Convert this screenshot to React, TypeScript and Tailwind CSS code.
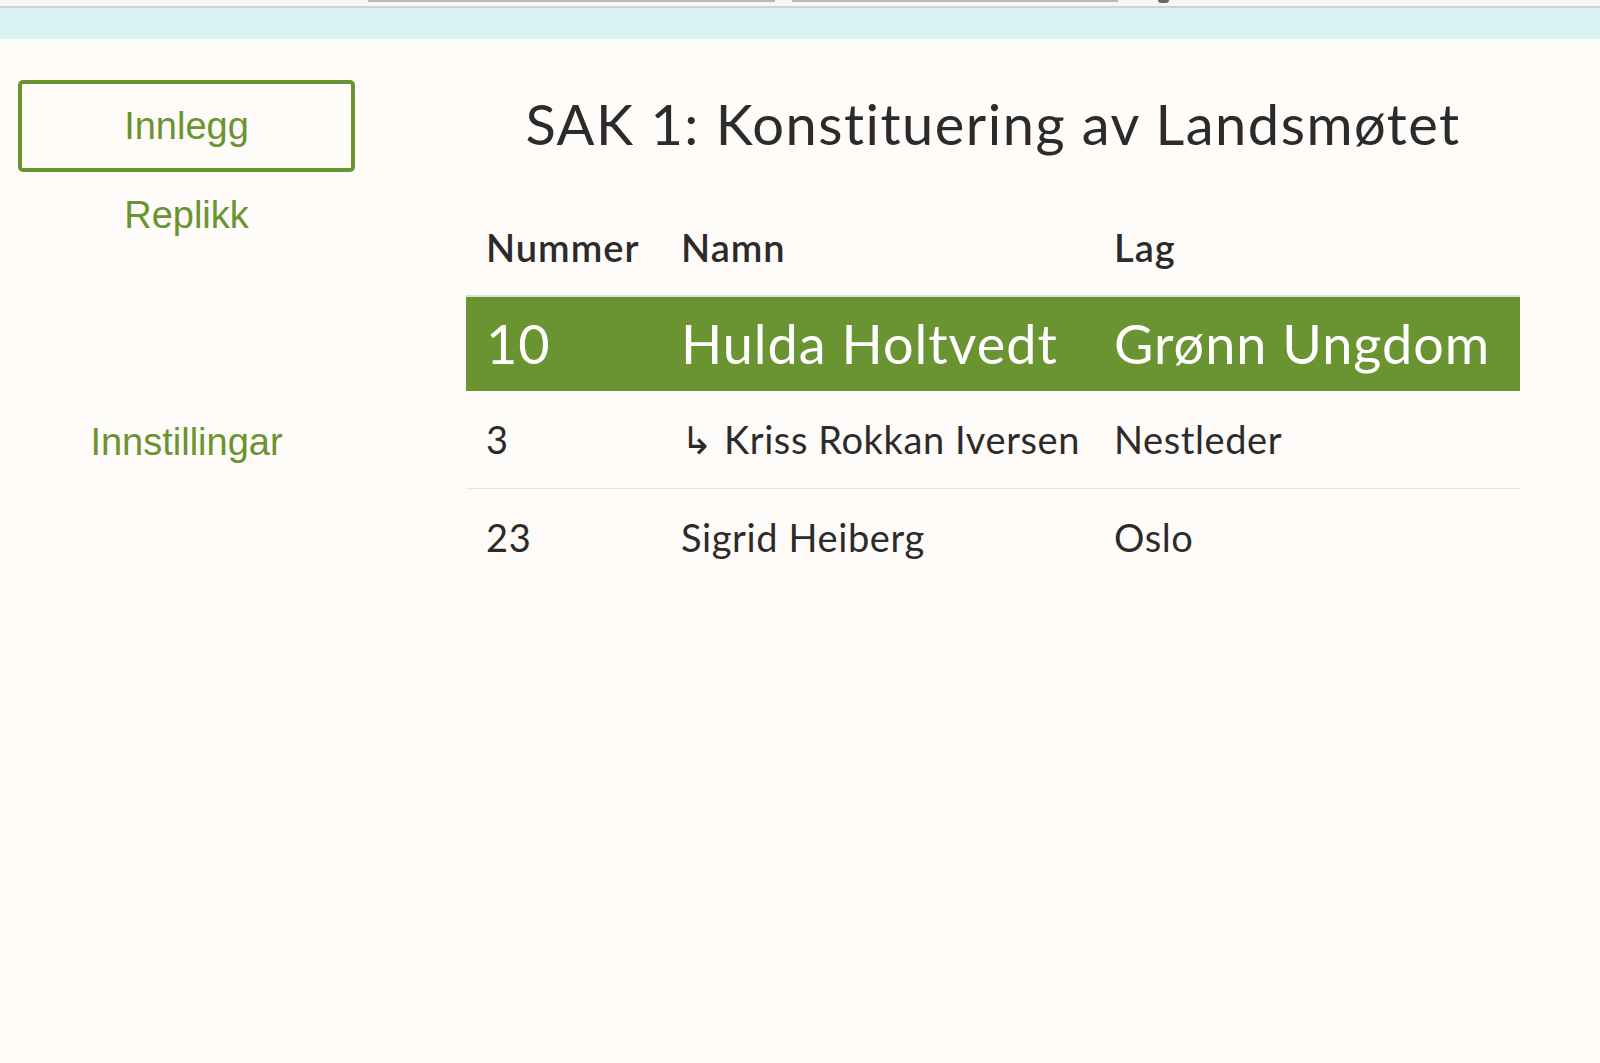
import React from 'react';

const rows = [
  { nr: '10', name: 'Hulda Holtvedt', lag: 'Grønn Ungdom', active: true },
  { nr: '3', name: '↳ Kriss Rokkan Iversen', lag: 'Nestleder' },
  { nr: '23', name: 'Sigrid Heiberg', lag: 'Oslo' },
];

const App = () => {
  return (
    <div className="min-h-[1063px] bg-[#fffbf8] text-[#2b2b2b]">
      {/* browser chrome leftovers */}
      <div className="flex h-[8px] items-start border-b-2 border-[#d2d2d2] bg-[#f6f6f6]">
        <div className="ml-[368px] h-[2px] w-[407px] bg-[#b9b9b9]" />
        <div className="ml-[17px] h-[2px] w-[326px] bg-[#b9b9b9]" />
        <div className="ml-[40px] h-[3px] w-[11px] rounded-b-full bg-[#666]" />
      </div>
      <div className="h-[31px] bg-[#d9f3f4]" />

      <div className="flex items-start pt-[41px]">
        <nav className="ml-[18px] flex w-[337px] flex-col items-center font-['Liberation_Sans',Arial,sans-serif] text-[38px] leading-[41px] text-[#6a9331]">
          <a className="flex h-[92px] w-full items-center justify-center rounded-[5px] border-4 border-[#6a9331]">
            Innlegg
          </a>
          <a className="mt-[23px]">Replikk</a>
          <a className="mt-[186px]">Innstillingar</a>
        </nav>

        <main className="ml-[111px] w-[1054px] font-['Lato','Noto_Sans',sans-serif]">
          <h1 className="mt-[10px] text-center text-[56px] font-normal leading-[1.2] tracking-[1.5px]">
            SAK 1: Konstituering av Landsmøtet
          </h1>

          <div className="mt-[68px]">
            <div className="grid h-[72px] grid-cols-[195px_433px_1fr] items-start border-b-2 border-[#dedede] text-[38px] font-semibold leading-[1.2] tracking-[1px]">
              <div className="pl-[20px]">Nummer</div>
              <div className="pl-[20px]">Namn</div>
              <div className="pl-[20px]">Lag</div>
            </div>
            {rows.map((row, i) =>
              row.active ? (
                <div
                  key={i}
                  className="grid h-[94px] grid-cols-[195px_433px_1fr] items-center bg-[#6a9332] text-[54px] leading-[1.2] tracking-[1px] text-white"
                >
                  <div className="pl-[20px]">{row.nr}</div>
                  <div className="pl-[20px]">{row.name}</div>
                  <div className="pl-[20px]">{row.lag}</div>
                </div>
              ) : (
                <div
                  key={i}
                  className="grid h-[98px] grid-cols-[195px_433px_1fr] items-center border-b border-[#e6e6e6] text-[38px] leading-[1.2] tracking-[0.6px] last:border-b-0"
                >
                  <div className="pl-[20px]">{row.nr}</div>
                  <div className="pl-[20px]">{row.name}</div>
                  <div className="pl-[20px]">{row.lag}</div>
                </div>
              )
            )}
          </div>
        </main>
      </div>
    </div>
  );
};

export default App;
